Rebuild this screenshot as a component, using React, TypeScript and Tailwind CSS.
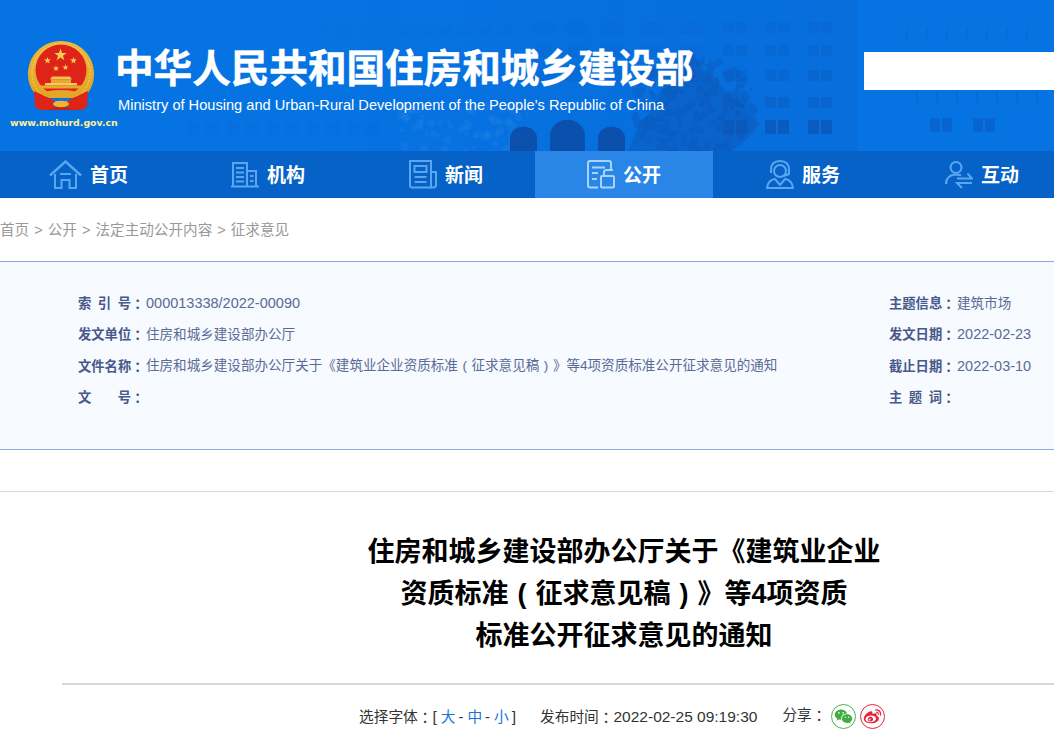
import React from "react";
import { RiWechatFill, RiWeiboFill } from "react-icons/ri";

const cjk = "font-['Liberation_Sans','Noto_Sans_CJK_SC',sans-serif]";
const tc = "font-['Noto_Sans_CJK_TC',sans-serif]";

function Star({ x, y, r }: { x: number; y: number; r: number }) {
  const pts: string[] = [];
  for (let i = 0; i < 10; i++) {
    const a = -Math.PI / 2 + (i * Math.PI) / 5;
    const rr = i % 2 === 0 ? r : r * 0.4;
    pts.push(`${x + rr * Math.cos(a)},${y + rr * Math.sin(a)}`);
  }
  return <polygon points={pts.join(" ")} fill="#f6d04a" />;
}

function Emblem() {
  return (
    <svg width="68" height="70" viewBox="0 0 68 70" className="block">
      <defs>
        <linearGradient id="gold" x1="0" y1="0" x2="0" y2="1">
          <stop offset="0" stopColor="#eeb93a" />
          <stop offset="1" stopColor="#e0a420" />
        </linearGradient>
      </defs>
      <path d="M34 0 C52 0 67 14 67 33 C67 44 62 52 56 57 L12 57 C6 52 1 44 1 33 C1 14 16 0 34 0z" fill="url(#gold)" />
      <circle cx="34" cy="32" r="29" fill="none" stroke="#f7d66a" strokeWidth="1" strokeDasharray="2 1.5" />
      <circle cx="34" cy="29" r="25.5" fill="#e0231a" />
      <Star x={33.5} y={14} r={6.5} />
      <Star x={20.5} y={19.5} r={3.6} />
      <Star x={46.5} y={19.5} r={3.6} />
      <Star x={29} y={27.5} r={3.2} />
      <Star x={38.5} y={26.5} r={3.2} />
      <path d="M25 35.5 H43 L45 38.5 H23z" fill="#f0c24a" />
      <rect x="24" y="38.5" width="20" height="3.5" fill="#e8a92e" />
      <rect x="18" y="42" width="32" height="2.5" fill="#f3cd5c" />
      <rect x="11" y="44.5" width="46" height="3" fill="#e8a92e" />
      <path d="M7 50 L18 55 L28 60 L27 69 L13 69 L8 66z" fill="#dd2418" />
      <path d="M61 50 L50 55 L40 60 L41 69 L55 69 L60 66z" fill="#dd2418" />
      <path d="M22 69 L34 64 L46 69z" fill="#c81f14" />
      <ellipse cx="34" cy="53" rx="19" ry="4" fill="#e4a626" />
      <ellipse cx="34" cy="63" rx="8" ry="3.2" fill="#efb52e" />
    </svg>
  );
}

function HeaderArt() {
  const items: React.ReactNode[] = [];
  const rows = [22, 45, 70, 97, 120];
  const rowOp = [0.16, 0.22, 0.28, 0.36, 0.75];
  const cols = [723, 765, 808];
  cols.forEach((x, c) =>
    rows.forEach((y, r) => {
      items.push(
        <g key={`a${c}${r}`} opacity={rowOp[r]}>
          <rect x={x} y={y} width="11" height={r === 4 ? 14 : 11} />
          <rect x={x + 13} y={y} width="11" height={r === 4 ? 14 : 11} />
        </g>
      );
    })
  );
  [532, 565, 600, 640, 680].forEach((x, c) =>
    [22, 45, 70].forEach((y, r) => {
      items.push(
        <g key={`b${c}${r}`} opacity={0.1 + r * 0.03}>
          <path d={`M${x} ${y + 12} v-8 a12 4 0 0 1 24 0 v8z`} />
        </g>
      );
    })
  );
  for (let c = 0; c < 7; c++) {
    items.push(<rect key={`c${c}`} x={906 + c * 20} y={28} width="2" height="13" opacity="0.2" />);
    items.push(<rect key={`d${c}`} x={916 + c * 20} y={92} width="2" height="11" opacity="0.3" />);
  }
  [930, 942, 973, 985].forEach((x) =>
    items.push(<rect key={`e${x}`} x={x} y={118} width="10" height="14" opacity="0.45" />)
  );
  for (let c = 0; c < 10; c++) {
    items.push(<rect key={`f${c}`} x={186 + c * 20} y={122} width="13" height="13" opacity={0.07} />);
    items.push(<rect key={`g${c}`} x={318 + c * 20} y={26} width="13" height="10" opacity={0.06} />);
  }
  let seed = 7;
  const rnd = () => {
    seed = (seed * 16807) % 2147483647;
    return seed / 2147483647;
  };
  const leaves: React.ReactNode[] = [];
  for (let i = 0; i < 260; i++) {
    const a = rnd() * Math.PI * 2;
    const d = Math.sqrt(rnd());
    const x = 692 + Math.cos(a) * d * 64;
    const y = 106 + Math.sin(a) * d * 52;
    leaves.push(<circle key={i} cx={x} cy={y} r={1.5 + rnd() * 2.5} />);
  }
  const mottle: React.ReactNode[] = [];
  for (let i = 0; i < 70; i++) {
    mottle.push(
      <circle key={i} cx={400 + rnd() * 130} cy={105 + rnd() * 46} r={2 + rnd() * 3} fill="#4a97ea" opacity="0.14" />
    );
  }
  return (
    <svg className="absolute inset-0" width="1054" height="151" viewBox="0 0 1054 151" fill="#0b55b6">
      <defs>
        <linearGradient id="bld" x1="0" y1="0" x2="1" y2="0">
          <stop offset="0" stopColor="#0a60c9" stopOpacity="0" />
          <stop offset="0.7" stopColor="#0a60c9" stopOpacity="0.22" />
          <stop offset="1" stopColor="#0a60c9" stopOpacity="0.26" />
        </linearGradient>
      </defs>
      <rect x="300" y="0" width="558" height="151" fill="url(#bld)" />
      {mottle}
      {items}
      {[510, 550, 598].map((x) => (
        <path key={x} d={`M${x} 151 v-15 a14 13 0 0 1 ${x === 550 ? 35 : 27} 0 v15z`} fill="#0c4da6" opacity="0.9" />
      ))}
      <path
        d="M628 151 L640 122 L650 112 L662 88 L672 76 L682 56 L692 50 L702 68 L716 78 L726 92 L742 102 L752 118 L760 124 L746 140 L732 151z"
        fill="#0c58ba"
        opacity="0.5"
      />
      <g fill="#0c57b8" opacity="0.4">{leaves}</g>
    </svg>
  );
}

const stroke = "#5aa6f0";

function NavIcon({ name, color }: { name: string; color: string }) {
  const p = { fill: "none", stroke: color, strokeWidth: 2 };
  const w = name === "home" ? 33 : 28;
  return (
    <svg width={w} height="29" viewBox={`0 0 ${w} 29`} className="block shrink-0">
      {name === "home" && (
        <g {...p}>
          <path d="M1 15.5 L16.5 1.5 L32 15.5" strokeWidth="2.4" />
          <path d="M6 14 V28 H12.5 V20 H20.5 V28 H27 V14" />
          <path d="M11 14 H22" />
        </g>
      )}
      {name === "org" && (
        <g {...p}>
          <path d="M0 26.5 H28" />
          <path d="M2 26 V3 H16 V26" />
          <path d="M16 11 H25 V26" />
          <path d="M5 8 H13 M5 12.5 H13 M5 17 H13 M5 21.5 H13" />
          <path d="M19 16 H22.5 M19 21 H22.5" />
        </g>
      )}
      {name === "news" && (
        <g {...p}>
          <path d="M6 27.5 H3 Q1 27.5 1 25 V1 H22 V27.5 H6" />
          <path d="M22 12 H27 V25 Q27 27.5 24 27.5 H22" />
          <rect x="5.5" y="6" width="12" height="6" />
          <path d="M5.5 17 H17.5 M5.5 22 H17.5" />
        </g>
      )}
      {name === "open" && (
        <g {...p}>
          <path d="M11 27.5 H3 Q1 27.5 1 25 V3 Q1 1 3 1 H22 Q24 1 24 3 V10" />
          <path d="M5 7.5 H18 M5 13 H11 M5 19 H10" />
          <rect x="14" y="16" width="13" height="11.5" rx="1" />
          <path d="M17 16 V12 Q17 10 20 10 H26" />
        </g>
      )}
      {name === "serve" && (
        <g {...p}>
          <circle cx="14" cy="11" r="6" />
          <path d="M5 13 V10 Q5 1 14 1 Q23 1 23 10 V14 L18 16" />
          <path d="M1 28 Q2 20 9 19 L14 25 L19 19 Q26 20 27 28 Z" />
        </g>
      )}
      {name === "talk" && (
        <g {...p}>
          <circle cx="11" cy="7.5" r="5.5" />
          <path d="M1 24 Q1 15 11 14.5 Q14 14.5 16 15.5" />
          <path d="M12 18.5 H27 L22.5 13.5 M27 23 H12 L17 28" />
        </g>
      )}
    </svg>
  );
}

const navItems = [
  { label: "首页", icon: "home", cls: "pr-[3px]" },
  { label: "机构", icon: "org", cls: "" },
  { label: "新闻", icon: "news", cls: "" },
  { label: "公开", icon: "open", cls: "bg-[#2a86e6]", active: true },
  { label: "服务", icon: "serve", cls: "pl-[2px]" },
  { label: "互动", icon: "talk", cls: "pl-[4px]" },
];

function Paren({ c }: { c: string }) {
  return <span className="inline-block w-[1em] text-center">{c}</span>;
}

function InfoRow({ label, value, num }: { label: string; value?: React.ReactNode; num?: boolean }) {
  return (
    <div className="flex h-[31.4px] items-center whitespace-nowrap">
      <span className="w-[53px] shrink-0 flex justify-between font-bold text-[13.3px] text-[#47598a]">
        {label.split(" ").map((c) => (
          <span key={c}>{c}</span>
        ))}
      </span>
      <span className={`${tc} w-[15px] shrink-0 font-bold text-[13.3px] text-[#47598a]`}>：</span>
      {value && <span className={`${num ? "text-[14.5px]" : "text-[13.57px]"} text-[#5a6b95]`}>{value}</span>}
    </div>
  );
}

export default function App() {
  return (
    <div className={`${cjk} w-full h-[746px] overflow-hidden bg-white`}>
      <header className="relative h-[151px] bg-[#0673e3] overflow-hidden">
        <HeaderArt />
        <div className="relative flex h-full">
          <div className="w-[115px] shrink-0 flex flex-col pt-[41px]">
            <div className="pl-[27px]">
              <Emblem />
            </div>
            <div className="pl-[10px] mt-[5px] text-[9.4px] leading-[14px] font-bold text-[#fff09a] whitespace-nowrap font-['DejaVu_Sans',sans-serif]">
              www.mohurd.gov.cn
            </div>
          </div>
          <div className="flex flex-col pt-[44px] whitespace-nowrap">
            <div className="text-[38.6px] leading-[50px] font-bold text-white [-webkit-text-stroke:0.5px_white]">
              中华人民共和国住房和城乡建设部
            </div>
            <div className="mt-px pl-[3px] text-[14.62px] leading-[20px] text-white">
              Ministry of Housing and Urban-Rural Development of the People’s Republic of China
            </div>
          </div>
          <div className="ml-auto mt-[52px] w-[190px] h-[38px] bg-white" />
        </div>
      </header>

      <nav className="flex h-[47px] bg-[#0762c8] pl-px overflow-hidden">
        {navItems.map((n) => (
          <div key={n.label} className={`w-[178px] shrink-0 flex items-center justify-center gap-[8px] ${n.cls}`}>
            <NavIcon name={n.icon} color={n.active ? "#a9d3fa" : stroke} />
            <span className="text-[19px] font-bold text-white leading-none pt-[2px]">{n.label}</span>
          </div>
        ))}
      </nav>

      <div className="h-[63px] pt-[2px] flex items-center gap-[5px] text-[14.6px] text-[#999] whitespace-nowrap">
        <span>首页</span>
        <span>&gt;</span>
        <span>公开</span>
        <span>&gt;</span>
        <span>法定主动公开内容</span>
        <span>&gt;</span>
        <span>征求意见</span>
      </div>

      <section className="bg-[#f7faff]">
        <div className="h-px bg-[#85acdc]" />
        <div className="h-[187px] pt-[26px] pl-[78px] flex">
          <div className="w-[811px] shrink-0">
            <InfoRow label="索 引 号" value="000013338/2022-00090" num />
            <InfoRow label="发文单位" value="住房和城乡建设部办公厅" />
            <InfoRow
              label="文件名称"
              value={
                <>
                  住房和城乡建设部办公厅关于《建筑业企业资质标准<Paren c="(" />征求意见稿<Paren c=")" />》等4项资质标准公开征求意见的通知
                </>
              }
            />
            <InfoRow label="文 号" />
          </div>
          <div>
            <InfoRow label="主题信息" value="建筑市场" />
            <InfoRow label="发文日期" value="2022-02-23" num />
            <InfoRow label="截止日期" value="2022-03-10" num />
            <InfoRow label="主 题 词" />
          </div>
        </div>
        <div className="h-px bg-[#85acdc]" />
      </section>

      <div className="mt-[41px] border-t border-t-[#d9d9d9]">
        <div className="ml-[62px] w-[1124px]">
          <h1 className="pt-[39px] pb-[26px] text-center text-[27px] leading-[42px] font-bold text-black">
            <span className="block">住房和城乡建设部办公厅关于《建筑业企业</span>
            <span className="block">
              资质标准<Paren c="(" />征求意见稿<Paren c=")" />》等4项资质
            </span>
            <span className="block">标准公开征求意见的通知</span>
          </h1>
          <div className="border-t-2 border-t-[#d5d9dd] h-[60px] flex items-start pt-[20px] pl-[297px] text-[14.7px] text-[#333] whitespace-nowrap">
            <span className="leading-[24px] flex">
              <span>选择字体</span>
              <span className={tc}>：</span>
              <span className="text-[15.5px]">[</span>
              <span className="ml-[4px] text-[#1a74d8]">大</span>
              <span className="ml-[3px]">-</span>
              <span className="ml-[4px] text-[#1a74d8]">中</span>
              <span className="ml-[3px]">-</span>
              <span className="ml-[4px] text-[#1a74d8]">小</span>
              <span className="ml-[3px] text-[15.5px]">]</span>
            </span>
            <span className="ml-[24px] leading-[24px] flex">
              <span>发布时间</span>
              <span className={tc}>：</span>
              <span className="text-[15.5px]">2022-02-25 09:19:30</span>
            </span>
            <span className="ml-[25px] leading-[20px] flex">
              <span>分享</span>
              <span className={tc}>：</span>
            </span>
            <span className="ml-[4px] -mt-[1px] flex gap-[4px]">
              <span className="w-[25px] h-[25px] rounded-full border border-[#4cb050] flex items-center justify-center text-[#3fae3f]">
                <RiWechatFill size={19} />
              </span>
              <span className="w-[25px] h-[25px] rounded-full border border-[#e8233a] flex items-center justify-center text-[#e8233a]">
                <RiWeiboFill size={19} />
              </span>
            </span>
          </div>
        </div>
      </div>
    </div>
  );
}
